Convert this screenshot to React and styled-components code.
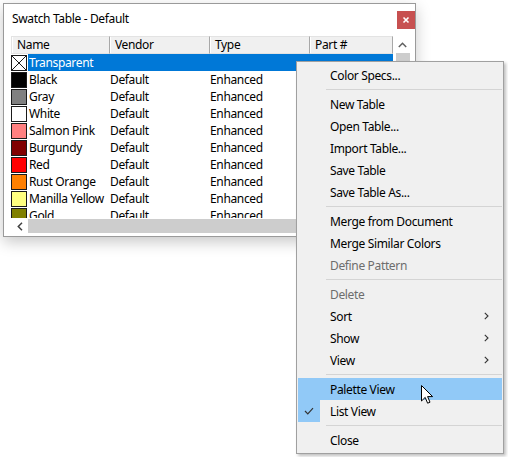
import React from "react";
import styled, { createGlobalStyle } from "styled-components";

const Global = createGlobalStyle`
  html, body { margin: 0; padding: 0; background: #ffffff; }
  body { font-family: "Noto Sans", "Segoe UI", sans-serif; font-size: 12px; letter-spacing: -0.35px; color: #000; }
  * { box-sizing: border-box; }
`;

const Desktop = styled.div`
  position: relative;
  width: 508px;
  height: 457px;
  overflow: hidden;
  background: #ffffff;
`;

const Window = styled.div`
  position: absolute;
  left: 3px;
  top: 3px;
  width: 413px;
  height: 234px;
  border: 1px solid #9a9a9a;
  background: #ffffff;
  box-shadow: 0 5px 14px rgba(0, 0, 0, 0.22);
  display: flex;
  flex-direction: column;
`;

const TitleBar = styled.div`
  height: 32px;
  flex: none;
  display: flex;
  align-items: flex-start;
  justify-content: space-between;
  padding-left: 8px;
`;

const Title = styled.div`
  line-height: 30px;
  font-size: 12px;
  color: #000;
`;

const CloseButton = styled.div`
  margin-top: 7px;
  width: 18px;
  height: 18px;
  background: #c75050;
  display: flex;
  align-items: center;
  justify-content: center;
`;

const Body = styled.div`
  flex: 1;
  padding: 0 4px 1px 7px;
  display: flex;
`;

const TableFrame = styled.div`
  flex: 1;
  display: flex;
  flex-direction: column;
`;

const TopArea = styled.div`
  display: flex;
  height: 182px;
  flex: none;
`;

const ListArea = styled.div`
  flex: 1;
  display: flex;
  flex-direction: column;
  overflow: hidden;
`;

const Header = styled.div`
  display: grid;
  grid-template-columns: 99px 100px 100px 83px;
  height: 18px;
  flex: none;
`;

const HeaderCell = styled.div`
  background: #f0f0f0;
  border-top: 1px solid #e3e3e3;
  border-bottom: 1px solid #e3e3e3;
  border-right: 1px solid #a8a8a8;
  box-shadow: inset 1px 0 0 #ffffff;
  padding-left: 5px;
  line-height: 16px;
  font-size: 12px;
  color: #000;
  white-space: nowrap;
  overflow: hidden;
  &:first-child {
    border-left: 1px solid #e3e3e3;
  }
`;

const Rows = styled.div`
  flex: 1;
  overflow: hidden;
`;

const Row = styled.div`
  display: grid;
  grid-template-columns: 17px 82px 100px 100px 83px;
  height: 17px;
  align-items: center;
`;

const Swatch = styled.div`
  width: 16px;
  height: 16px;
  margin-top: 1px;
  border: 1px solid #1a1a1a;
  background: ${(p) => p.$color};
  overflow: hidden;
`;

const Cell = styled.div`
  height: 17px;
  line-height: 17px;
  white-space: nowrap;
  overflow: hidden;
  padding-left: ${(p) => p.$pad || 0}px;
  background: ${(p) => (p.$selected ? "#0078d7" : "transparent")};
  color: ${(p) => (p.$selected ? "#ffffff" : "#000000")};
`;

const VScroll = styled.div`
  width: 17px;
  display: flex;
  flex-direction: column;
  background: #ffffff;
`;

const ArrowBox = styled.div`
  width: ${(p) => p.$w || 17}px;
  height: ${(p) => p.$h || 17}px;
  display: flex;
  align-items: center;
  justify-content: center;
  flex: none;
`;

const VThumb = styled.div`
  margin-left: 2px;
  width: 14px;
  flex: 1;
  background: #cdcdcd;
`;

const HScroll = styled.div`
  height: 16px;
  display: flex;
  align-items: center;
`;

const HThumb = styled.div`
  flex: 1;
  height: 14px;
  background: #cdcdcd;
`;

const Menu = styled.div`
  position: absolute;
  left: 296px;
  top: 61px;
  width: 208px;
  height: 393px;
  background: #f0f0f0;
  border: 1px solid #a0a0a0;
  box-shadow: 2px 2px 3px rgba(0, 0, 0, 0.25);
  padding: 2px 1px 2px 1px;
  display: flex;
  flex-direction: column;
`;

const Item = styled.div`
  height: 22px;
  flex: none;
  display: flex;
  align-items: center;
  background: ${(p) => (p.$hover ? "#91c9f7" : "transparent")};
  color: ${(p) => (p.$disabled ? "#6d6d6d" : "#000000")};
`;

const CheckCol = styled.div`
  width: 22px;
  height: 22px;
  flex: none;
  display: flex;
  align-items: center;
  justify-content: center;
  background: ${(p) => (p.$checked ? "#91c9f7" : "transparent")};
`;

const Label = styled.div`
  flex: 1;
  padding-left: 10px;
  white-space: nowrap;
`;

const Sub = styled.div`
  width: 18px;
  display: flex;
  align-items: center;
  justify-content: flex-start;
`;

const Separator = styled.div`
  height: 7px;
  flex: none;
  display: flex;
  align-items: center;
  padding-left: 28px;
  &::after {
    content: "";
    flex: 1;
    height: 1px;
    background: #d4d4d4;
  }
`;

const Cursor = styled.svg`
  position: absolute;
  left: 421px;
  top: 385px;
`;

const swatches = [
  { name: "Black", color: "#000000" },
  { name: "Gray", color: "#808080" },
  { name: "White", color: "#ffffff" },
  { name: "Salmon Pink", color: "#ff8080" },
  { name: "Burgundy", color: "#800000" },
  { name: "Red", color: "#ff0000" },
  { name: "Rust Orange", color: "#ff8000" },
  { name: "Manilla Yellow", color: "#ffff80" },
  { name: "Gold", color: "#808000" },
];

const menu = [
  { label: "Color Specs..." },
  "sep",
  { label: "New Table" },
  { label: "Open Table..." },
  { label: "Import Table..." },
  { label: "Save Table" },
  { label: "Save Table As..." },
  "sep",
  { label: "Merge from Document" },
  { label: "Merge Similar Colors" },
  { label: "Define Pattern", disabled: true },
  "sep",
  { label: "Delete", disabled: true },
  { label: "Sort", sub: true },
  { label: "Show", sub: true },
  { label: "View", sub: true },
  "sep",
  { label: "Palette View", hover: true },
  { label: "List View", checked: true },
  "sep",
  { label: "Close" },
];

const Chevron = () => (
  <svg width="5" height="8" viewBox="0 0 5 8">
    <path d="M0.8 0.8 L4 4 L0.8 7.2" fill="none" stroke="#333" strokeWidth="1.1" />
  </svg>
);

export default function App() {
  return (
    <Desktop>
      <Global />
      <Window>
        <TitleBar>
          <Title>Swatch Table - Default</Title>
          <CloseButton>
            <svg width="8" height="8" viewBox="0 0 8 8">
              <path d="M1.5 1.5 L6.5 6.5 M6.5 1.5 L1.5 6.5" stroke="#fff" strokeWidth="1.6" />
            </svg>
          </CloseButton>
        </TitleBar>
        <Body>
          <TableFrame>
            <TopArea>
              <ListArea>
                <Header>
                  <HeaderCell>Name</HeaderCell>
                  <HeaderCell>Vendor</HeaderCell>
                  <HeaderCell>Type</HeaderCell>
                  <HeaderCell>Part #</HeaderCell>
                </Header>
                <Rows>
                  <Row>
                    <Swatch $color="#ffffff">
                      <svg width="14" height="14" viewBox="0 0 14 14" style={{ display: "block" }}>
                        <path d="M0 0 L14 14 M14 0 L0 14" stroke="#1a1a1a" strokeWidth="1" />
                      </svg>
                    </Swatch>
                    <Cell $selected $pad={1}>Transparent</Cell>
                    <Cell $selected />
                    <Cell $selected />
                    <Cell $selected />
                  </Row>
                  {swatches.map((s) => (
                    <Row key={s.name}>
                      <Swatch $color={s.color} />
                      <Cell $pad={1}>{s.name}</Cell>
                      <Cell>Default</Cell>
                      <Cell>Enhanced</Cell>
                      <Cell />
                    </Row>
                  ))}
                </Rows>
              </ListArea>
              <VScroll>
                <ArrowBox $h={17}>
                  <svg width="9" height="6" viewBox="0 0 9 6">
                    <path d="M0.8 5 L4.5 1.3 L8.2 5" fill="none" stroke="#606060" strokeWidth="1.5" />
                  </svg>
                </ArrowBox>
                <VThumb />
              </VScroll>
            </TopArea>
            <HScroll>
              <ArrowBox $w={17} $h={16}>
                <svg width="6" height="9" viewBox="0 0 6 9">
                  <path d="M5 0.8 L1.3 4.5 L5 8.2" fill="none" stroke="#404040" strokeWidth="1.5" />
                </svg>
              </ArrowBox>
              <HThumb />
            </HScroll>
          </TableFrame>
        </Body>
      </Window>
      <Menu>
        {menu.map((m, i) =>
          m === "sep" ? (
            <Separator key={i} />
          ) : (
            <Item key={i} $hover={m.hover} $disabled={m.disabled}>
              <CheckCol $checked={m.checked}>
                {m.checked && (
                  <svg width="10" height="8" viewBox="0 0 10 8">
                    <path d="M1 4 L3.8 6.8 L9 1.2" fill="none" stroke="#333" strokeWidth="1.2" />
                  </svg>
                )}
              </CheckCol>
              <Label>{m.label}</Label>
              <Sub>{m.sub && <Chevron />}</Sub>
            </Item>
          )
        )}
      </Menu>
      <Cursor width="13" height="20" viewBox="0 0 13 20">
        <path
          d="M0.5 0.5 L0.5 16 L4.2 12.4 L6.6 18.2 L9 17.2 L6.6 11.6 L11.6 11.6 Z"
          fill="#ffffff"
          stroke="#000000"
          strokeWidth="1"
          strokeLinejoin="miter"
        />
      </Cursor>
    </Desktop>
  );
}
